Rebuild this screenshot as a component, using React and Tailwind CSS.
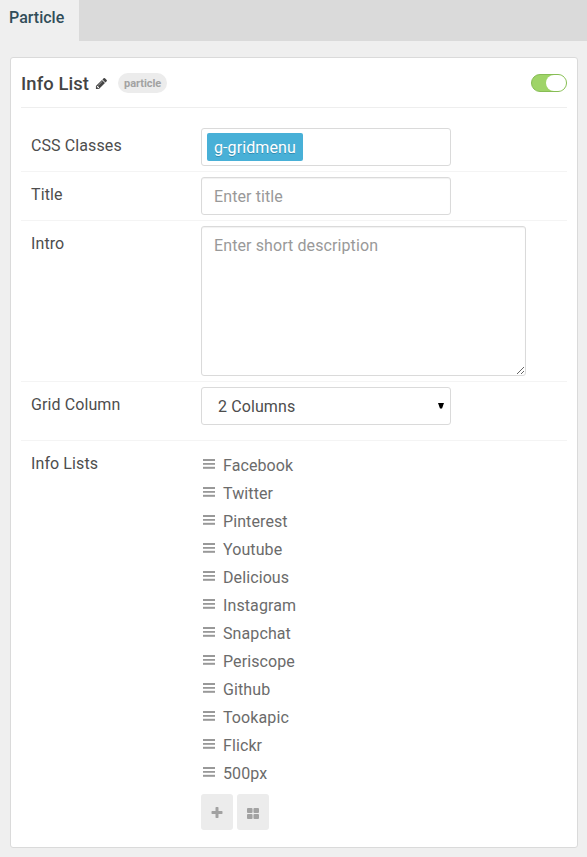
import React from "react";

const items = ["Facebook", "Twitter", "Pinterest", "Youtube", "Delicious", "Instagram", "Snapchat", "Periscope", "Github", "Tookapic", "Flickr", "500px"];

function Bars() {
  return (
    <svg width="12" height="10" viewBox="0 0 12 10" fill="#999" className="mb-[2px] shrink-0">
      <rect y="0" width="12" height="2" />
      <rect y="4" width="12" height="1.8" />
      <rect y="7.8" width="12" height="2" />
    </svg>
  );
}

function Pencil() {
  return (
    <svg width="13" height="13" viewBox="0 0 1792 1792" fill="#444">
      <path d="M491 1536l91-91-235-235-91 91v107h128v128h107zm523-928q0-22-22-22-10 0-17 7l-542 542q-7 7-7 17 0 22 22 22 10 0 17-7l542-542q7-7 7-17zm-54-192l416 416-832 832h-416v-416zm683 96q0 53-37 90l-166 166-416-416 166-165q36-38 90-38 53 0 91 38l235 234q37 39 37 91z" />
    </svg>
  );
}

function Row({ label, className, children }) {
  return (
    <div className={"flex items-start border-[#f4f4f4] " + className}>
      <div className="w-[180px] shrink-0 pl-[10px] pt-[6px] leading-6">{label}</div>
      {children}
    </div>
  );
}

export default function App() {
  return (
    <div className="flex h-[857px] w-[587px] flex-col overflow-hidden bg-[#efefef] font-['Roboto',sans-serif] text-base tracking-[0.1px] text-[#4d4d4d]">
      <div className="flex h-[41px] shrink-0 bg-[#dadada]">
        <div className="w-[79px] bg-[#efefef] pl-[9px] pt-[6px] font-medium leading-6 tracking-normal text-[#314d59]">Particle</div>
      </div>
      <main className="ml-[10px] mt-4 h-[791px] w-[568px] shrink-0 rounded-[3px] border border-[#dadada] bg-white px-[10px]">
        <header className="flex h-[50px] items-center border-b border-[#eee]">
          <h1 className="pt-[2px] text-[18.4px] font-medium text-[#444]">Info List</h1>
          <span className="ml-[6px] mt-px"><Pencil /></span>
          <span className="ml-[10px] mt-px h-5 rounded-full bg-[#ececec] px-[6px] pt-px text-[11px] font-bold leading-5 tracking-[-0.05px] text-[#a2a2a2]">particle</span>
          <div className="ml-auto flex h-[18px] w-9 justify-end rounded-full border border-[#87bd55] bg-[#9fd468]">
            <div className="h-4 w-5 rounded-full bg-white" />
          </div>
        </header>
        <Row label="CSS Classes" className="h-16 border-b pt-5">
          <div className="h-[38px] w-[250px] rounded-[3px] border border-[#dadada] p-[5px] pt-1">
            <div className="h-7 w-24 rounded-[2px] bg-[#48b0d7] pl-[7px] pt-px leading-7 text-white [text-shadow:0_1px_0_rgba(0,51,83,0.3)]">g-gridmenu</div>
          </div>
        </Row>
        <Row label="Title" className="h-[49px] border-b pt-[5px]">
          <input placeholder="Enter title" className="h-[38px] w-[250px] rounded-[3px] border border-[#dadada] px-3 tracking-[0.1px] shadow-[inset_0_1px_1px_rgba(0,0,0,0.06)] placeholder:text-[#999]" />
        </Row>
        <Row label="Intro" className="h-[161px] border-b pt-[5px]">
          <textarea placeholder="Enter short description" className="h-[150px] w-[325px] resize rounded-[3px] border border-[#dadada] px-3 py-[7px] leading-6 tracking-[0.1px] shadow-[inset_0_1px_1px_rgba(0,0,0,0.06)] placeholder:text-[#999]" />
        </Row>
        <Row label="Grid Column" className="h-[59px] border-b pt-[5px]">
          <div className="flex h-[38px] w-[250px] items-center justify-between rounded-[3px] border border-[#dadada] pl-4 pr-[6px]">
            <span className="pt-[2px]">2 Columns</span>
            <svg width="6" height="6" viewBox="0 0 6 6"><path d="M0 0H6L4 5.5H2Z" fill="#000" /></svg>
          </div>
        </Row>
        <Row label="Info Lists" className="pt-[5px]">
          <div className="pt-[5px]">
            <ul className="text-[#6b6b6b]">
              {items.map((item) => (
                <li key={item} className="flex h-7 items-center gap-2 pl-[2px]">
                  <Bars />
                  <span className="pt-[2px]">{item}</span>
                </li>
              ))}
            </ul>
            <div className="mt-[7px] flex gap-1">
              <button className="flex h-9 w-8 items-center justify-center rounded-[3px] bg-[#ececec] pt-[2px]">
                <svg width="14" height="14" viewBox="0 0 1792 1792" fill="#a2a2a2"><path d="M1600 736v192q0 40-28 68t-68 28h-416v416q0 40-28 68t-68 28h-192q-40 0-68-28t-28-68v-416h-416q-40 0-68-28t-28-68v-192q0-40 28-68t68-28h416v-416q0-40 28-68t68-28h192q40 0 68 28t28 68v416h416q40 0 68 28t28 68z" /></svg>
              </button>
              <button className="flex h-9 w-8 items-center justify-center rounded-[3px] bg-[#ececec] pt-[2px]">
                <svg width="12" height="11" viewBox="0 0 13 11" preserveAspectRatio="none" fill="#a2a2a2"><rect width="6" height="5" rx="1" /><rect x="7" width="6" height="5" rx="1" /><rect y="6" width="6" height="5" rx="1" /><rect x="7" y="6" width="6" height="5" rx="1" /></svg>
              </button>
            </div>
          </div>
        </Row>
      </main>
    </div>
  );
}
